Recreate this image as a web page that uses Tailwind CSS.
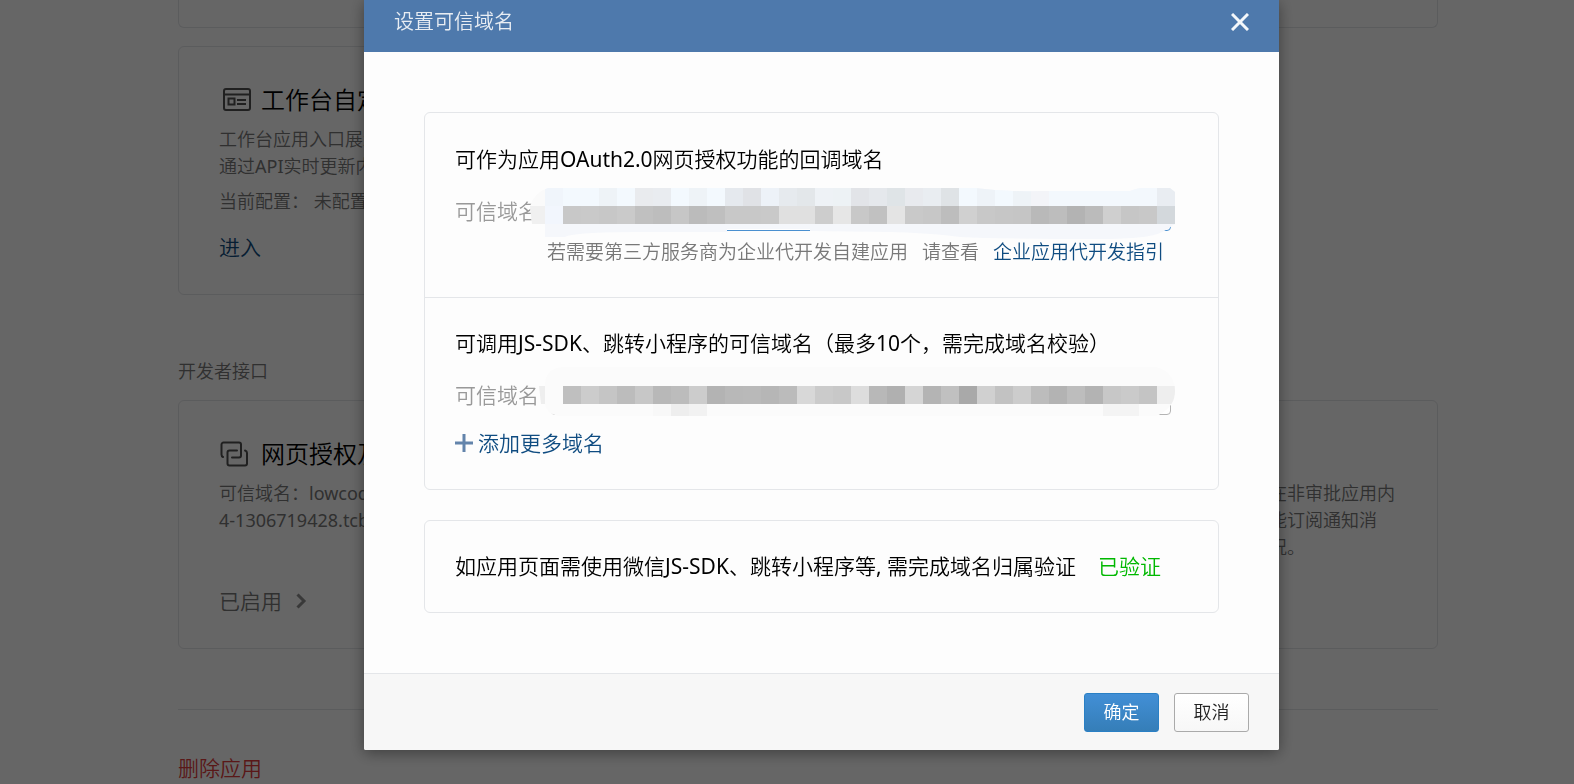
<!doctype html>
<html lang="zh-CN">
<head>
    <meta charset="UTF-8">
    <meta name="viewport" content="width=device-width, initial-scale=1.0">
    <script src="https://cdn.jsdelivr.net/npm/@tailwindcss/browser@4"></script>
    <title>设置可信域名</title>
</head>
<body class="bg-white font-['Noto_Sans','Noto_Sans_CJK_SC_DemiLight','Noto_Sans_CJK_SC',sans-serif] font-normal text-black">
    <!-- app settings page -->
    <main class="h-screen overflow-hidden pl-[42px]">
        <div class="max-w-[1260px] mx-auto">
            <div class="grid grid-cols-3 gap-[18px]">
                <div class="h-7 border border-t-0 border-[#e4e6e9] rounded-b-md"></div>
                <div class="h-7 border border-t-0 border-[#e4e6e9] rounded-b-md"></div>
                <div class="h-7 border border-t-0 border-[#e4e6e9] rounded-b-md"></div>
                <section class="h-[249px] border border-[#e4e6e9] rounded-md px-10 pt-[35px]">
                    <h3 class="flex items-center gap-2 text-2xl leading-9">
                        <svg class="w-[34px] h-7" viewBox="0 0 34 28" fill="none" stroke="#505050" stroke-width="2">
                            <rect x="5" y="3" width="26" height="21" rx="2" />
                            <path d="M5 8.500h26M18 14h9M18 18h9" />
                            <rect x="9.500" y="12.500" width="6" height="6" />
                        </svg>
                        工作台自定义
                    </h3>
                    <p class="mt-2 text-lg leading-[27px] text-[#787878]">工作台应用入口展示<br>通过API实时更新内容</p>
                    <p class="mt-2 text-lg leading-[27px] text-[#787878]">当前配置： 未配置</p>
                    <a href="#" class="block mt-4 text-[21px] leading-8 text-[#0f4c81]">进入</a>
                </section>
            </div>

            <h2 class="mt-[63px] text-lg leading-[27px] text-[#787878]">开发者接口</h2>
            <div class="mt-[15px] grid grid-cols-3 gap-[18px]">
                <section class="h-[249px] border border-[#e4e6e9] rounded-md px-10 pt-[35px]">
                    <h3 class="flex items-center gap-2 text-2xl leading-9">
                        <svg class="w-[34px] h-7" viewBox="0 0 34 28" fill="none" stroke="#505050" stroke-width="2" stroke-linecap="round" stroke-linejoin="round">
                            <path d="M4 17c-1-.5-1.500-1-1.500-2.500V4.500a2 2 0 0 1 2-2H20a2 2 0 0 1 2 2v11a2 2 0 0 1-2 2h-7" />
                            <path d="M26 10.500c1.500.5 2 1 2 2.500v10.500a2 2 0 0 1-2 2H10.500a2 2 0 0 1-2-2v-11a2 2 0 0 1 2-2H18" />
                        </svg>
                        网页授权及JS-SDK
                    </h3>
                    <p class="mt-2 text-lg leading-[27px] text-[#787878]">可信域名：lowcode-<br>4-1306719428.tcb</p>
                    <p class="mt-[51px] flex items-center gap-[14px] text-[21px] leading-8 text-[#787878]">
                        已启用
                        <svg class="w-3 h-4" viewBox="0 0 12 16" fill="none" stroke="#909090" stroke-width="3"><path d="M1.500 1.500 8 8l-6.500 6.500" /></svg>
                    </p>
                </section>
                <section class="h-[249px] border border-[#e4e6e9] rounded-md"></section>
                <section class="h-[249px] border border-[#e4e6e9] rounded-md pl-10 pt-[35px]">
                    <h3 class="text-2xl leading-9">审批接口</h3>
                    <p class="mt-2 text-lg leading-[27px] text-[#787878] whitespace-nowrap">审批接口可让企业的成员在非审批应用内<br>发起审批流程，管理员还能订阅通知消<br>息，及时了解审批单的状况。</p>
                </section>
            </div>

            <hr class="mt-[60px] border-[#e4e6e9]">
            <button type="button" class="mt-[42px] text-[21px] leading-8 text-[#e03c3c]">删除应用</button>
        </div>
    </main>

    <!-- dialog -->
    <div class="fixed inset-0 bg-black/60 pl-[69px]">
        <div role="dialog" aria-labelledby="dialog-title" class="max-w-[915px] mx-auto bg-[#fdfdfd] rounded-b-xs shadow-[0_3px_15px_rgba(0,0,0,0.4)]">
            <header class="h-[52px] pb-2 px-[30px] flex items-center justify-between bg-[#4e79ac]">
                <h1 id="dialog-title" class="text-xl text-[#e8edf3]">设置可信域名</h1>
                <button type="button" aria-label="关闭">
                    <svg class="w-[18px] h-[18px]" viewBox="0 0 18 18" stroke="#f4f7fa" stroke-width="3"><path d="m1 1 16 16M17 1 1 17" /></svg>
                </button>
            </header>

            <form id="domain-form" class="p-[60px] text-[21px]">
                <div class="border border-[#e4e6e9] rounded-md">
                    <section class="p-[30px] border-b border-[#e4e6e9]">
                        <h2 class="leading-[33px]">可作为应用OAuth2.0网页授权功能的回调域名</h2>
                        <div class="mt-4 flex items-center">
                            <label for="callback-domain" class="w-24 leading-[39px] text-[#999]">可信域名</label>
                            <div class="relative w-[620px] h-[39px]">
                                <input id="callback-domain" type="text" class="block w-full h-full px-3 bg-white border border-[#4a90d0] rounded-sm outline-none">
                                <svg class="absolute -left-[21px] -top-[5px] w-[645px] h-[52px]" viewBox="530 187 645 52" shape-rendering="crispEdges">
                                    <clipPath id="smudge-1">
                                        <path d="M530 206Q535 192 548 188H975Q1005 192 1040 191H1130Q1138 188 1142 188H1170L1175 192V224Q1165 231 1160 233 1150 238 1110 239 1000 239 960 237 930 233 890 232L810 231V229H727V232H640Q575 232 565 237H545V224H532z" />
                                    </clipPath>
                                    <g id="mosaic-1" clip-path="url(#smudge-1)">
                                        <path fill="#fafafa" d="M530 187h15v52h-15z" />
                                        <path fill="#f5f7fb" d="M545 187h630v52H545z" />
                                        <path fill="#f0f0f0" d="M530 206h15v18h-15z" />
                                    </g>
                                </svg>
                            </div>
                        </div>
                        <p class="mt-[6px] pl-[92px] flex gap-[14px] text-[19px] leading-[30px] text-[#787878] whitespace-nowrap">
                            <span>若需要第三方服务商为企业代开发自建应用</span>
                            <span>请查看</span>
                            <a href="#" class="text-[#0f4c81]">企业应用代开发指引</a>
                        </p>
                    </section>

                    <section class="p-[30px] pt-[29px]">
                        <h2 class="leading-[33px]">可调用JS-SDK、跳转小程序的可信域名（最多10个，需完成域名校验）</h2>
                        <div class="mt-4 flex items-center">
                            <label for="sdk-domain" class="w-24 leading-[39px] text-[#999]">可信域名</label>
                            <div class="relative w-[620px] h-[39px]">
                                <input id="sdk-domain" type="text" class="block w-full h-full px-3 bg-white border border-[#b4b4b4] rounded-sm outline-none">
                                <svg class="absolute -left-[21px] -top-[9px] w-[645px] h-[49px]" viewBox="530 367 645 49" shape-rendering="crispEdges">
                                    <clipPath id="smudge-2">
                                        <path d="M539 386h6q0-19 20-19H1157q18 6 18 24 0 14-13 22l-5 3H558q-12-3-13-12h-4z" />
                                    </clipPath>
                                    <g id="mosaic-2" clip-path="url(#smudge-2)">
                                        <path fill="#fbfbfb" d="M539 367h636v49H539z" />
                                        <path fill="#eee" d="M539 386h6v18h-6z" />
                                    </g>
                                </svg>
                            </div>
                        </div>
                        <button type="button" class="mt-3 flex items-center gap-[5px] leading-8 text-[#0f4c81]">
                            <svg class="w-[18px] h-[18px]" viewBox="0 0 18 18" stroke="#6384ab" stroke-width="3"><path d="M9 0v18M0 9h18" /></svg>
                            添加更多域名
                        </button>
                    </section>
                </div>

                <div class="mt-[30px] border border-[#e4e6e9] rounded-md p-[30px] flex gap-[22px] leading-[31px] whitespace-nowrap">
                    <span>如应用页面需使用微信JS-SDK、跳转小程序等, 需完成域名归属验证</span>
                    <span class="text-[#00b800]">已验证</span>
                </div>
            </form>

            <footer class="h-[77px] px-[30px] flex items-center justify-end gap-[15px] bg-[#f7f7f7] border-t border-[#e4e6e9] rounded-b-xs text-lg">
                <button type="submit" form="domain-form" class="w-[75px] h-[39px] rounded-[3px] border border-[#2a80c5] bg-linear-to-b from-[#428fd6] to-[#357eb8] text-white">确定</button>
                <button type="button" class="w-[75px] h-[39px] rounded-[3px] border border-[#aaa] bg-linear-to-b from-white to-[#f7f7f7] text-[#222]">取消</button>
            </footer>
        </div>
    </div>

    <script>
        // each row: target group, first x, y, height, cell colours
        const rows = [
            ['mosaic-1', 545, 188, 18, 'f0f5fb f3f9fe f3f9fe eef3f7 f3f9fe e9ebee e9ecf0 f3f9fe eef3f7 f3f9fe e5e9ee e0e2e6 edf2f8 e6eaee e3e7ea eef2f6 edf2f5 e2e4e8 e5e8ec dfe4e7 e8eaee e9edf1 dfe3e6 f3f9fe eef3f8 f3f9fe eef3f7 f3f4f8 f3f8fd f3f8fd f3f8fd f3f8fd f3f8fd f3f8fd e9edf2'],
            ['mosaic-1', 545, 206, 18, 'f2f6fd c8c8c8 c9c9c9 c7c7c7 cacaca c0c0c0 bdbdbd c6c6c6 bbbbbb bfbfbf c8c8c8 c8c8c8 c9c9c9 e0e0e0 e0e0e0 cdcdcd e6e6e6 c8c8c8 c1c1c1 e4e4e4 c9c9c9 c7c7c7 bdbdbd d0d0d0 c8c8c8 c6c6c6 c5c5c5 b9b9b9 bdbdbd b3b3b3 bbbbbb cfcfcf c6c6c6 c8c8c8 d3d8dc'],
            ['mosaic-2', 563, 386, 18, 'bfbfbf cccccc c5c5c5 bcbcbc c7c7c7 b8b8b8 bcbcbc cccccc b3b3b3 b8b8b8 b9b9b9 b6b6b6 bbbbbb d8d8d8 cbcbcb c8c8c8 dddddd b8b8b8 b0b0b0 d5d5d5 b4b4b4 c0c0c0 a9a9a9 d0d0d0 c2c2c2 cccccc bcbcbc b3b3b3 bdbdbd b3b3b3 c7c7c7 cacaca c4c4c4 eeeeee'],
            ['mosaic-2', 653, 404, 12, 'f8f8f8 eeeeee f2f2f2'],
            ['mosaic-2', 1103, 404, 12, 'f4f4f4 f4f4f4']
        ];
        rows.forEach(([id, x, y, height, colors]) => {
            colors.split(' ').forEach((color, i) => {
                const cell = document.createElementNS('http://www.w3.org/2000/svg', 'rect');
                cell.setAttribute('x', x + i * 18);
                cell.setAttribute('y', y);
                cell.setAttribute('width', 18);
                cell.setAttribute('height', height);
                cell.setAttribute('fill', '#' + color);
                document.getElementById(id).appendChild(cell);
            });
        });
    </script>
</body>
</html>
